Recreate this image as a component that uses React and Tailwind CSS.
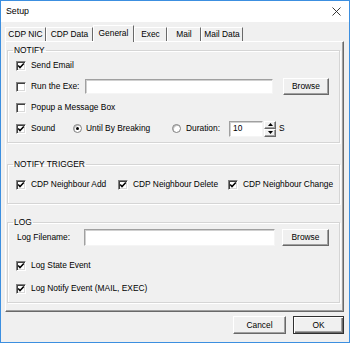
import React from "react";

const FONT = { fontFamily: '"Liberation Sans", Arial, sans-serif' };

function Check({ checked }) {
  return (
    <span className="w-[10px] h-[10px] shrink-0 flex items-center justify-center bg-white border-t border-l border-t-[#808080] border-l-[#808080] border-b border-r border-b-white border-r-white shadow-[inset_1px_1px_0_#404040,inset_-1px_-1px_0_#d8d8d8]">
      {checked && (
        <svg width="8" height="8" viewBox="0 0 8 8">
          <path d="M1.2 3.6 L3 5.6 L6.8 1.6" stroke="#000" strokeWidth="1.5" fill="none" />
        </svg>
      )}
    </span>
  );
}

function Radio({ checked }) {
  return (
    <span className="w-[9px] h-[9px] shrink-0 rounded-full bg-white border border-[#808080] flex items-center justify-center shadow-[inset_1px_1px_0_#c0c0c0]">
      {checked && <span className="w-[3px] h-[3px] rounded-full bg-black" />}
    </span>
  );
}

function CheckLabel({ checked, children, className = "" }) {
  return (
    <div className={"flex items-center gap-[5px] " + className}>
      <Check checked={checked} />
      <span className="whitespace-nowrap">{children}</span>
    </div>
  );
}

function Btn({ children, className = "", def = false }) {
  return (
    <div
      className={
        "flex items-center justify-center bg-[#f0f0f0] " +
        (def
          ? "border border-[#303030] shadow-[inset_1px_1px_0_#fff,inset_-1px_-1px_0_#696969,inset_-2px_-2px_0_#a0a0a0] "
          : "border-t border-l border-t-white border-l-white border-b border-r border-b-[#696969] border-r-[#696969] shadow-[inset_-1px_-1px_0_#a0a0a0] ") +
        className
      }
    >
      {children}
    </div>
  );
}

function Input({ className = "", children }) {
  return (
    <div
      className={
        "bg-white flex items-center pl-[3px] border-t border-l border-t-[#a0a0a0] border-l-[#a0a0a0] border-b border-r border-b-[#f5f5f5] border-r-[#f5f5f5] shadow-[inset_1px_1px_0_#d0d0d0] " +
        className
      }
    >
      {children}
    </div>
  );
}

function Group({ title, children, className = "" }) {
  return (
    <fieldset
      className={
        "border border-[#d5d5d5] shadow-[inset_1px_1px_0_#fff,1px_1px_0_#fff] pl-[8px] " + className
      }
    >
      <legend className="-ml-[3px] px-[1px] leading-[10px] h-[10px]">{title}</legend>
      {children}
    </fieldset>
  );
}

function Tab({ label, w, selected }) {
  return (
    <div
      className={
        "flex items-center justify-center whitespace-nowrap bg-[#f0f0f0] border-t border-l border-t-white border-l-white border-r border-r-[#696969] " +
        (selected ? "h-[17px] -mb-px relative z-10 pb-[2px]" : "h-[14px]")
      }
      style={{ width: w }}
    >
      {label}
    </div>
  );
}

export default function App() {
  return (
    <div
      className="w-[350px] h-[343px] border border-[#3c8fe0] bg-[#f0f0f0] flex flex-col text-black text-[8.4px] leading-none"
      style={FONT}
    >
      {/* title bar */}
      <div className="h-[21px] bg-white flex items-center justify-between shrink-0">
        <span className="pl-[5px] text-[8.8px]">Setup</span>
        <svg width="9" height="9" viewBox="0 0 9 9" className="mr-[8px]">
          <path d="M0.5 0.5 L8.5 8.5 M8.5 0.5 L0.5 8.5" stroke="#222" strokeWidth="0.9" />
        </svg>
      </div>

      {/* tabs */}
      <div className="flex items-end h-[16px] mt-[3px] ml-[4px]">
        <Tab label="CDP NIC" w={41} />
        <Tab label="CDP Data" w={47} />
        <Tab label="General" w={41} selected />
        <Tab label="Exec" w={33} />
        <Tab label="Mail" w={34} />
        <Tab label="Mail Data" w={42} />
      </div>

      {/* panel */}
      <div className="ml-[4px] w-[339px] h-[271px] border-t border-l border-t-white border-l-white border-b border-r border-b-[#696969] border-r-[#696969] shadow-[inset_-1px_-1px_0_#a0a0a0] pl-[1px] pr-[3px] pt-[3px] flex flex-col">
        <Group title="NOTIFY" className="pb-[3px]">
          <div className="h-[21px] flex items-center">
            <CheckLabel checked>Send Email</CheckLabel>
          </div>
          <div className="h-[21px] flex items-center">
            <CheckLabel className="w-[69px]">Run the Exe:</CheckLabel>
            <Input className="w-[188px] h-[15px]" />
            <Btn className="w-[46px] h-[17px] ml-[10px]">Browse</Btn>
          </div>
          <div className="h-[21px] flex items-center">
            <CheckLabel>Popup a Message Box</CheckLabel>
          </div>
          <div className="h-[21px] flex items-center">
            <CheckLabel checked className="w-[57px]">Sound</CheckLabel>
            <div className="w-[99px] flex items-center gap-[4px]">
              <Radio checked />
              <span className="whitespace-nowrap">Until By Breaking</span>
            </div>
            <div className="w-[57px] flex items-center gap-[5px]">
              <Radio />
              <span>Duration:</span>
            </div>
            <Input className="w-[34px] h-[16px]">10</Input>
            <div className="flex flex-col ml-[1px] h-[16px]">
              <Btn className="w-[12px] h-[8px]">
                <svg width="5" height="3" viewBox="0 0 5 3"><path d="M2.5 0 L5 3 L0 3 Z" fill="#000" /></svg>
              </Btn>
              <Btn className="w-[12px] h-[8px]">
                <svg width="5" height="3" viewBox="0 0 5 3"><path d="M0 0 L5 0 L2.5 3 Z" fill="#000" /></svg>
              </Btn>
            </div>
            <span className="ml-[3px]">S</span>
          </div>
        </Group>

        <Group title="NOTIFY TRIGGER" className="mt-[16px] pt-[5px] pb-[8px]">
          <div className="h-[21px] flex items-center">
            <CheckLabel checked className="w-[102px]">CDP Neighbour Add</CheckLabel>
            <CheckLabel checked className="w-[110px]">CDP Neighbour Delete</CheckLabel>
            <CheckLabel checked>CDP Neighbour Change</CheckLabel>
          </div>
        </Group>

        <Group title="LOG" className="mt-[13px] pb-[3px]">
          <div className="h-[21px] flex items-center">
            <span className="w-[68px] pl-[1px]">Log Filename:</span>
            <Input className="w-[191px] h-[17px]" />
            <Btn className="w-[47px] h-[17px] ml-[7px]">Browse</Btn>
          </div>
          <div className="h-[21px] mt-[7px] flex items-center">
            <CheckLabel checked>Log State Event</CheckLabel>
          </div>
          <div className="h-[21px] mt-[2px] flex items-center">
            <CheckLabel checked>Log Notify Event (MAIL, EXEC)</CheckLabel>
          </div>
        </Group>
      </div>

      {/* buttons */}
      <div className="flex justify-end gap-[7px] mt-[4px] pr-[5px]">
        <Btn className="w-[53px] h-[18px]">Cancel</Btn>
        <Btn def className="w-[51px] h-[18px]">OK</Btn>
      </div>
    </div>
  );
}
